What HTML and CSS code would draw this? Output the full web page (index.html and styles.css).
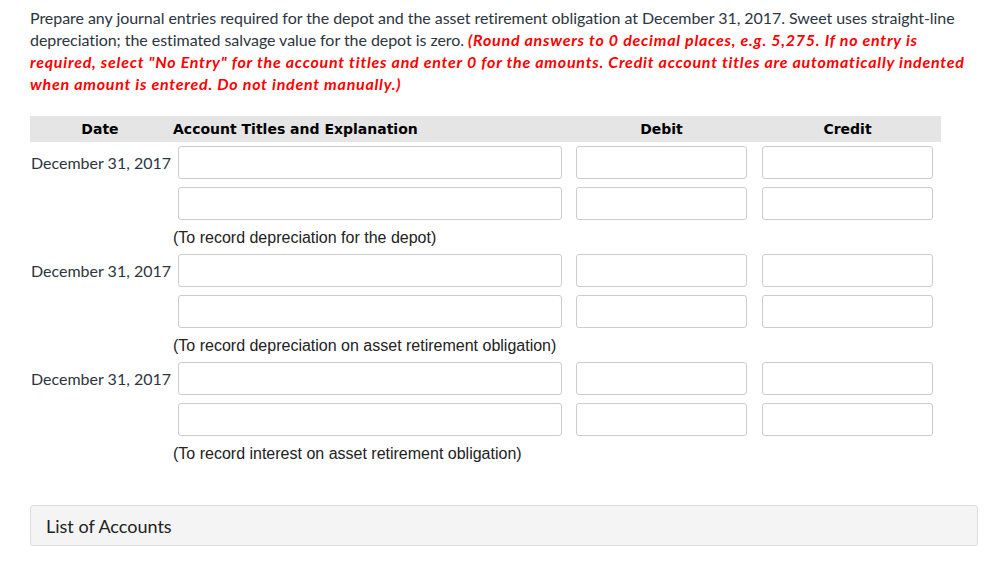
FILE: index.html
```html
<!DOCTYPE html>
<html lang="en">

<head>
    <meta charset="UTF-8" />
    <title>Journal Entries</title>
    <link rel="stylesheet" href="styles.css">
</head>

<body>
    <div class="question">
        <p class="prompt">
            Prepare any journal entries required for the depot and the asset retirement obligation at December 31, 2017. Sweet uses straight-line depreciation; the estimated salvage value for the depot is zero.
            <span class="note">(Round answers to 0 decimal places, e.g. 5,275. If no entry is required, select "No Entry" for the account titles and enter 0 for the amounts. Credit account titles are automatically indented when amount is entered. Do not indent manually.)</span>
        </p>

        <div class="journal">
            <div class="journal-head">
                <div class="col-date">Date</div>
                <div class="col-account">Account Titles and Explanation</div>
                <div class="col-debit">Debit</div>
                <div class="col-credit">Credit</div>
            </div>

            <!-- Entry 1 -->
            <div class="entry">
                <div class="line">
                    <div class="date">December 31, 2017</div>
                    <input class="field" type="text" />
                    <input class="field" type="text" />
                    <input class="field credit" type="text" />
                </div>
                <div class="line">
                    <div class="date"></div>
                    <input class="field" type="text" />
                    <input class="field" type="text" />
                    <input class="field credit" type="text" />
                </div>
                <div class="explain">(To record depreciation for the depot)</div>
            </div>

            <!-- Entry 2 -->
            <div class="entry">
                <div class="line">
                    <div class="date">December 31, 2017</div>
                    <input class="field" type="text" />
                    <input class="field" type="text" />
                    <input class="field credit" type="text" />
                </div>
                <div class="line">
                    <div class="date"></div>
                    <input class="field" type="text" />
                    <input class="field" type="text" />
                    <input class="field credit" type="text" />
                </div>
                <div class="explain">(To record depreciation on asset retirement obligation)</div>
            </div>

            <!-- Entry 3 -->
            <div class="entry">
                <div class="line">
                    <div class="date">December 31, 2017</div>
                    <input class="field" type="text" />
                    <input class="field" type="text" />
                    <input class="field credit" type="text" />
                </div>
                <div class="line">
                    <div class="date"></div>
                    <input class="field" type="text" />
                    <input class="field" type="text" />
                    <input class="field credit" type="text" />
                </div>
                <div class="explain">(To record interest on asset retirement obligation)</div>
            </div>
        </div>

        <div class="accounts">List of Accounts</div>
    </div>
</body>

</html>
```

FILE: styles.css
```css
body {
    margin: 0;
    background-color: #ffffff;
    font-family: Lato, "Open Sans", sans-serif;
    color: #2d3540;
}

.question {
    padding: 7px 0 0 30px;
}

.prompt {
    width: 940px;
    margin: 0;
    font-size: 16px;
    line-height: 22px;
    letter-spacing: -0.05px;
}

.note {
    color: #ff0000;
    font-weight: bold;
    font-style: italic;
    letter-spacing: 0.75px;
}

/* Journal table */
.journal {
    margin-top: 21px;
}

.journal-head {
    display: grid;
    grid-template-columns: 140px 392px 185px 186px;
    align-items: center;
    width: 911px;
    height: 26px;
    background-color: #e5e5e5;
    font-family: "DejaVu Sans", Verdana, sans-serif;
    font-size: 14px;
    font-weight: bold;
    color: #000;
}

.col-date {
    text-align: center;
}

.col-account {
    padding-left: 3px;
}

.col-debit {
    padding-left: 14px;
    text-align: center;
}

.col-credit {
    padding-left: 15px;
    text-align: center;
}

.entry {
    padding-top: 4px;
}

.line {
    display: grid;
    grid-template-columns: 134px 384px 171px 172px;
    column-gap: 14px;
    align-items: center;
    margin-bottom: 8px;
}

.line:nth-child(2) {
    margin-bottom: 0;
}

.date {
    padding-left: 1px;
    font-size: 16px;
    white-space: nowrap;
    color: #2d3540;
}

.field {
    box-sizing: border-box;
    height: 33px;
    margin: 0;
    border: 1px solid #cccccc;
    border-radius: 3px;
    background-color: #fff;
}

.credit {
    justify-self: end;
    width: 171px;
}

.explain {
    padding: 9px 0 3px 143px;
    font-family: "Liberation Sans", Arial, sans-serif;
    font-size: 16px;
    line-height: 18px;
    color: #222;
}

/* List of accounts bar */
.accounts {
    box-sizing: border-box;
    width: 948px;
    height: 41px;
    margin-top: 39px;
    padding: 0 15px;
    display: flex;
    align-items: center;
    background-color: #f4f4f4;
    border: 1px solid #dddddd;
    border-radius: 3px;
    box-shadow: 0 1px 1px rgba(0, 0, 0, 0.06);
    font-size: 18px;
    color: #222;
}
```
